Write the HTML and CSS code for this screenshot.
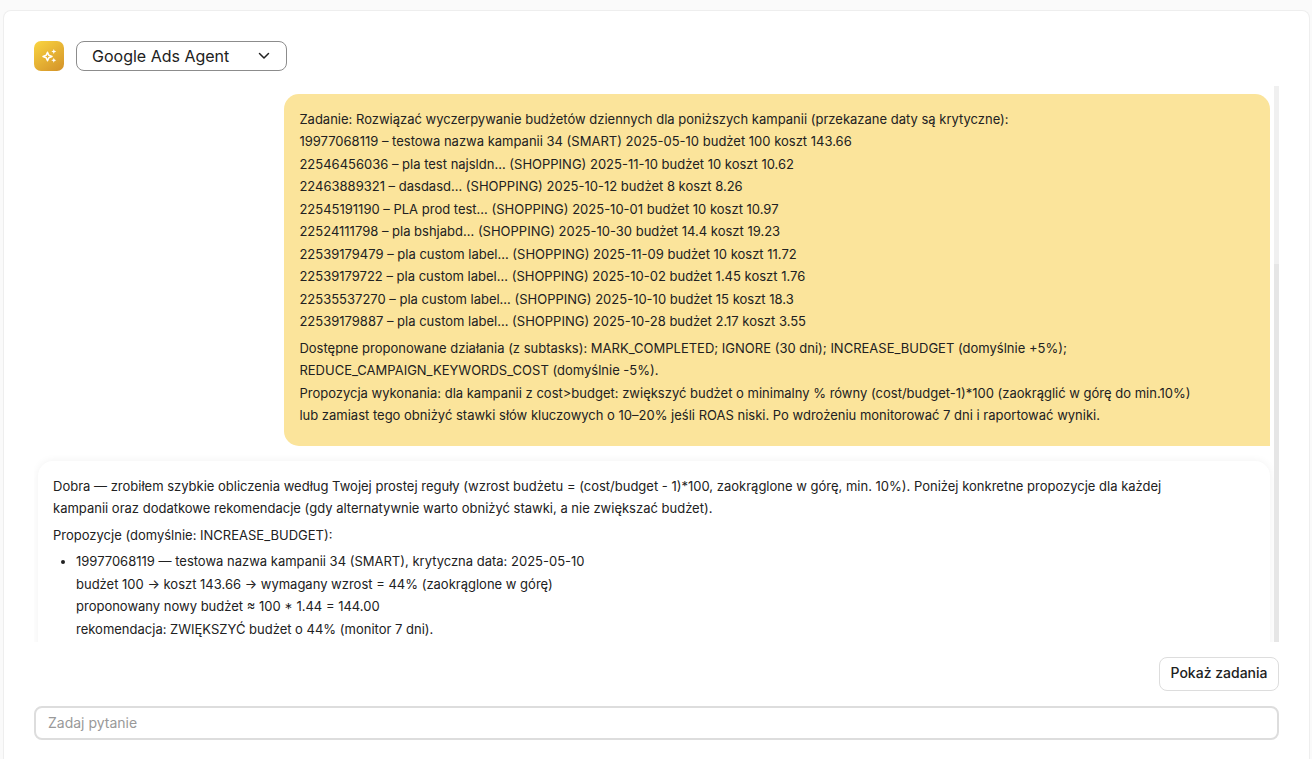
FILE: index.html
```html
<!DOCTYPE html>
<html lang="pl">
<head>
<meta charset="utf-8">
<meta name="viewport" content="width=device-width, initial-scale=1">
<title>Google Ads Agent</title>
<link rel="stylesheet" href="styles.css">
</head>
<body>
<main class="panel">
  <header class="panel-header">
    <span class="agent-logo" aria-hidden="true">
      <svg viewBox="0 0 30 30" width="30" height="30">
        <path d="M13.5 11.2 L14.8 14.3 L18 15.5 L14.8 16.7 L13.5 19.8 L12.2 16.7 L9 15.5 L12.2 14.3 Z" fill="none" stroke="#fff" stroke-width="1.5" stroke-linejoin="round"/>
        <path d="M19.8 8 L20.5 9.8 L22.3 10.5 L20.5 11.2 L19.8 13 L19.1 11.2 L17.3 10.5 L19.1 9.8 Z M19.8 16.8 L20.5 18.6 L22.3 19.3 L20.5 20 L19.8 21.8 L19.1 20 L17.3 19.3 L19.1 18.6 Z" fill="#fff"/>
      </svg>
    </span>
    <div class="agent-picker">
      <select class="agent-select" aria-label="Agent">
        <option>Google Ads Agent</option>
      </select>
      <svg class="agent-chevron" viewBox="0 0 12 8" width="12" height="8" aria-hidden="true"><path d="M1.5 1.5 L6 6 L10.5 1.5" fill="none" stroke="#222" stroke-width="1.5" stroke-linecap="round" stroke-linejoin="round"/></svg>
    </div>
  </header>

  <section class="chat">
    <div class="messages">
      <article class="message message-user">
        <p>Zadanie: Rozwiązać wyczerpywanie budżetów dziennych dla poniższych kampanii (przekazane daty są krytyczne):<br>
        19977068119 – testowa nazwa kampanii 34 (SMART) 2025-05-10 budżet 100 koszt 143.66<br>
        22546456036 – pla test najsldn… (SHOPPING) 2025-11-10 budżet 10 koszt 10.62<br>
        22463889321 – dasdasd… (SHOPPING) 2025-10-12 budżet 8 koszt 8.26<br>
        22545191190 – PLA prod test… (SHOPPING) 2025-10-01 budżet 10 koszt 10.97<br>
        22524111798 – pla bshjabd… (SHOPPING) 2025-10-30 budżet 14.4 koszt 19.23<br>
        22539179479 – pla custom label… (SHOPPING) 2025-11-09 budżet 10 koszt 11.72<br>
        22539179722 – pla custom label… (SHOPPING) 2025-10-02 budżet 1.45 koszt 1.76<br>
        22535537270 – pla custom label… (SHOPPING) 2025-10-10 budżet 15 koszt 18.3<br>
        22539179887 – pla custom label… (SHOPPING) 2025-10-28 budżet 2.17 koszt 3.55</p>
        <p>Dostępne proponowane działania (z subtasks): MARK_COMPLETED; IGNORE (30 dni); INCREASE_BUDGET (domyślnie +5%); REDUCE_CAMPAIGN_KEYWORDS_COST (domyślnie -5%).<br>
        Propozycja wykonania: dla kampanii z cost&gt;budget: zwiększyć budżet o minimalny % równy (cost/budget-1)*100 (zaokrąglić w górę do min.10%)<br>
        lub zamiast tego obniżyć stawki słów kluczowych o 10–20% jeśli ROAS niski. Po wdrożeniu monitorować 7 dni i raportować wyniki.</p>
      </article>
      <article class="message message-agent">
        <p>Dobra — zrobiłem szybkie obliczenia według Twojej prostej reguły (wzrost budżetu = (cost/budget - 1)*100, zaokrąglone w górę, min. 10%). Poniżej konkretne propozycje dla każdej<br>
        kampanii oraz dodatkowe rekomendacje (gdy alternatywnie warto obniżyć stawki, a nie zwiększać budżet).</p>
        <p>Propozycje (domyślnie: INCREASE_BUDGET):</p>
        <ul>
          <li>19977068119 — testowa nazwa kampanii 34 (SMART), krytyczna data: 2025-05-10<br>
          budżet 100 → koszt 143.66 → wymagany wzrost = 44% (zaokrąglone w górę)<br>
          proponowany nowy budżet ≈ 100 * 1.44 = 144.00<br>
          rekomendacja: ZWIĘKSZYĆ budżet o 44% (monitor 7 dni).</li>
        </ul>
      </article>
    </div>
    <div class="scroll-track" aria-hidden="true"><div class="scroll-thumb"></div></div>
  </section>

  <div class="actions">
    <button class="tasks-button" type="button">Pokaż zadania</button>
  </div>
  <input class="question" type="text" placeholder="Zadaj pytanie" aria-label="Zadaj pytanie">
</main>
</body>
</html>
```

FILE: styles.css
```css
* {
  box-sizing: border-box;
}

body {
  margin: 0;
  height: 100vh;
  padding: 10px 2px 0 3px;
  display: flex;
  background: #fafafa;
  color: #212121;
  font-family: Inter, "Noto Sans", sans-serif;
  font-size: 13px;
}

.panel {
  flex: 1;
  min-width: 0;
  display: flex;
  flex-direction: column;
  padding: 30px 30px 19px;
  background: #fff;
  border: 1px solid #eee;
  border-bottom: 0;
  border-radius: 8px 8px 0 0;
}

.panel-header {
  display: flex;
  align-items: center;
  gap: 12px;
  margin-bottom: 15px;
}

.agent-logo {
  width: 30px;
  height: 30px;
  border-radius: 7px;
  background: linear-gradient(145deg, #fad541, #d39128);
}

.agent-logo svg {
  display: block;
}

.agent-picker {
  display: grid;
  align-items: center;
}

.agent-select,
.agent-chevron {
  grid-area: 1 / 1;
}

.agent-select {
  appearance: none;
  width: 211px;
  height: 30px;
  padding: 0 40px 0 15px;
  border: 1px solid #8c8c8c;
  border-radius: 8px;
  background: #fff;
  color: #212121;
  font: inherit;
  font-size: 16px;
}

.agent-chevron {
  justify-self: end;
  margin-right: 17px;
  pointer-events: none;
}

.chat {
  flex: 1;
  min-height: 0;
  display: flex;
}

.messages {
  flex: 1;
  display: flex;
  flex-direction: column;
  gap: 15px;
  padding: 8px 4px;
  overflow-y: auto;
  scrollbar-width: none;
  line-height: 1.73;
}

.message {
  flex: none;
  padding: 14px 15px;
  border-radius: 15px;
}

.message p,
.message ul {
  margin: 0 0 4px;
}

.message ul {
  padding-left: 23px;
}

.message-user {
  align-self: flex-end;
  width: 80%;
  padding-bottom: 15px;
  border-bottom-right-radius: 0;
  background: #fbe49b;
}

.message-agent {
  background: #fff;
  box-shadow: 0 0 8px rgba(0, 0, 0, 0.06);
}

.scroll-track {
  width: 5px;
  display: flex;
  flex-direction: column;
  justify-content: flex-end;
  background: #f0f0f0;
}

.scroll-thumb {
  height: 68%;
  background: #e6e6e6;
}

.actions {
  display: flex;
  justify-content: flex-end;
  padding: 15px 0;
}

.tasks-button {
  width: 120px;
  height: 34px;
  padding: 0 0 4px;
  border: 1px solid #ddd;
  border-radius: 8px;
  background: #fff;
  color: #212121;
  font: inherit;
  font-size: 14px;
  font-weight: 500;
  white-space: nowrap;
}

.question {
  width: 100%;
  height: 34px;
  padding: 0 12px 2px;
  border: 2px solid #ddd;
  border-radius: 8px;
  background: #fff;
  color: #212121;
  font: inherit;
  font-size: 14px;
}

.question::placeholder {
  color: #999;
}
```
